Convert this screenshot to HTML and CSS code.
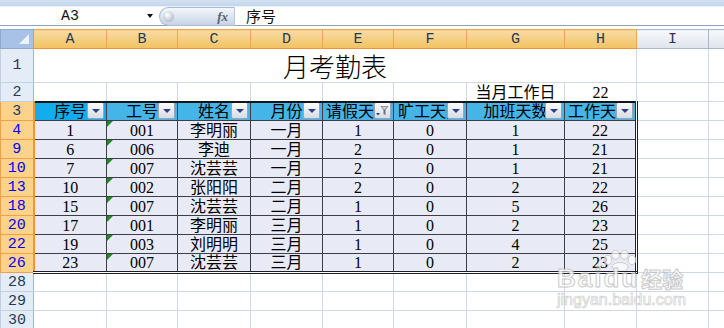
FILE: index.html
```html
<!DOCTYPE html>
<html lang="zh-CN">
<head>
    <meta charset="UTF-8">
    <meta name="viewport" content="width=device-width, initial-scale=1.0">
    <title>月考勤表</title>
    <link rel="stylesheet" href="styles.css">
</head>
<body>
    <div class="top-strip"></div>

    <div class="formula-bar">
        <div class="name-box">
            <span class="cell-ref">A3</span>
            <span class="name-arrow"></span>
        </div>
        <div class="fx-pill">
            <span class="fx-knob"></span>
            <span class="fx">fx</span>
        </div>
        <div class="formula-text">序号</div>
    </div>

    <table class="sheet">
        <colgroup>
            <col class="w-rh">
            <col class="w-73"><col class="w-71"><col class="w-73"><col class="w-72">
            <col class="w-71"><col class="w-73"><col class="w-98"><col class="w-72">
            <col class="w-72"><col class="w-30">
        </colgroup>

        <thead>
            <tr class="col-heads">
                <th class="corner"></th>
                <th class="sel">A</th><th class="sel">B</th><th class="sel">C</th><th class="sel">D</th>
                <th class="sel">E</th><th class="sel">F</th><th class="sel">G</th><th class="sel">H</th>
                <th>I</th><th></th>
            </tr>
        </thead>

        <tbody>
            <tr class="r-title">
                <th class="rh">1</th>
                <td colspan="8" class="title">月考勤表</td>
                <td></td><td></td>
            </tr>
            <tr>
                <th class="rh">2</th>
                <td></td><td></td><td></td><td></td><td></td><td></td>
                <td>当月工作日</td><td>22</td>
                <td></td><td></td>
            </tr>
        </tbody>

        <tbody class="data">
            <tr class="head">
                <th class="rh">3</th>
                <td class="active">序号<span class="dd"></span></td>
                <td>工号<span class="dd"></span></td>
                <td>姓名<span class="dd"></span></td>
                <td>月份<span class="dd"></span></td>
                <td>请假天数<span class="dd filtered"><svg width="15" height="15" viewBox="0 0 15 15"><path d="M1 10 L5 10 L3 12.5 Z" fill="#2f3f86"/><path d="M5.5 3 L13.5 3 L10.5 7 L10.5 12 L8.5 11 L8.5 7 Z" fill="#6b6f78"/><path d="M6.5 3.6 L12.5 3.6 L10 6.6 L9 6.6 Z" fill="#c9ccd3"/></svg></span></td>
                <td>旷工天数<span class="dd"></span></td>
                <td>加班天数<span class="dd"></span></td>
                <td>工作天数<span class="dd"></span></td>
                <td></td><td></td>
            </tr>
            <tr>
                <th class="rh">4</th>
                <td>1</td><td class="txt">001</td><td>李明丽</td><td>一月</td><td>1</td><td>0</td><td>1</td><td>22</td>
                <td></td><td></td>
            </tr>
            <tr>
                <th class="rh">9</th>
                <td>6</td><td class="txt">006</td><td>李迪</td><td>一月</td><td>2</td><td>0</td><td>1</td><td>21</td>
                <td></td><td></td>
            </tr>
            <tr>
                <th class="rh">10</th>
                <td>7</td><td class="txt">007</td><td>沈芸芸</td><td>一月</td><td>2</td><td>0</td><td>1</td><td>21</td>
                <td></td><td></td>
            </tr>
            <tr>
                <th class="rh">13</th>
                <td>10</td><td class="txt">002</td><td>张阳阳</td><td>二月</td><td>2</td><td>0</td><td>2</td><td>22</td>
                <td></td><td></td>
            </tr>
            <tr>
                <th class="rh">18</th>
                <td>15</td><td class="txt">007</td><td>沈芸芸</td><td>二月</td><td>1</td><td>0</td><td>5</td><td>26</td>
                <td></td><td></td>
            </tr>
            <tr>
                <th class="rh">20</th>
                <td>17</td><td class="txt">001</td><td>李明丽</td><td>三月</td><td>1</td><td>0</td><td>2</td><td>23</td>
                <td></td><td></td>
            </tr>
            <tr>
                <th class="rh">22</th>
                <td>19</td><td class="txt">003</td><td>刘明明</td><td>三月</td><td>1</td><td>0</td><td>4</td><td>25</td>
                <td></td><td></td>
            </tr>
            <tr>
                <th class="rh">26</th>
                <td>23</td><td class="txt">007</td><td>沈芸芸</td><td>三月</td><td>1</td><td>0</td><td>2</td><td>23</td>
                <td></td><td></td>
            </tr>
        </tbody>

        <tbody>
            <tr><th class="rh">28</th><td></td><td></td><td></td><td></td><td></td><td></td><td></td><td></td><td></td><td></td></tr>
            <tr><th class="rh">29</th><td></td><td></td><td></td><td></td><td></td><td></td><td></td><td></td><td></td><td></td></tr>
            <tr><th class="rh">30</th><td></td><td></td><td></td><td></td><td></td><td></td><td></td><td></td><td></td><td></td></tr>
        </tbody>
    </table>

    <!-- site watermark over the lower right of the sheet -->
    <div class="watermark">
        <svg class="paw" width="34" height="20" viewBox="0 0 34 20">
            <ellipse cx="5" cy="10" rx="3.8" ry="4.8"/>
            <ellipse cx="12.5" cy="4.8" rx="3.8" ry="4.3"/>
            <ellipse cx="21.5" cy="4.8" rx="3.8" ry="4.3"/>
            <ellipse cx="29" cy="10" rx="3.8" ry="4.8"/>
            <ellipse cx="17" cy="17" rx="8" ry="4.5"/>
        </svg>
        <div class="wm-logo"><span>Bai</span><span class="wm-du">du</span><span class="wm-cn">经验</span></div>
        <div class="wm-url">jingyan.baidu.com</div>
    </div>
</body>
</html>
```

FILE: styles.css
```css
body {
    margin: 0;
    width: 724px;
    height: 328px;
    overflow: hidden;
    position: relative;
    background-color: #fff;
    font-family: "Liberation Serif", "Noto Sans CJK SC", serif;
}

/* ribbon edge + formula bar */
.top-strip {
    height: 6px;
    background: linear-gradient(#d3e1f2, #c3d6ed);
    border-bottom: 1px solid #e9f0f9;
}

.formula-bar {
    display: flex;
    height: 18px;
    border-bottom: 1px solid #8ea3bf;
    margin-bottom: 3px;
}

.name-box {
    width: 159px;
    display: flex;
    align-items: center;
}

.cell-ref {
    width: 140px;
    text-align: center;
    font-family: "Liberation Mono", monospace;
    font-size: 15px;
    color: #111;
}

.name-arrow {
    margin-left: 7px;
    border-left: 3px solid transparent;
    border-right: 3px solid transparent;
    border-top: 4px solid #111;
}

.fx-pill {
    width: 76px;
    display: flex;
    align-items: center;
    border: 1px solid #a9bad2;
    border-right-color: #b9c7da;
    border-radius: 10px 0 0 10px;
    background: linear-gradient(#f5f8fc, #dfe7f2 45%, #c6d4e7);
    box-sizing: border-box;
    height: 19px;
}

.fx-knob {
    width: 11px;
    height: 11px;
    margin-left: 3px;
    border-radius: 50%;
    background: radial-gradient(circle at 40% 35%, #fff, #c9d0da 55%, #9aa4b3);
}

.fx {
    margin-left: auto;
    margin-right: 6px;
    font-family: "Liberation Serif", serif;
    font-style: italic;
    font-weight: bold;
    font-size: 13px;
    color: #5a5f68;
}

.formula-text {
    padding-left: 11px;
    font-family: "Noto Sans CJK SC", sans-serif;
    font-size: 15px;
    line-height: 18px;
    color: #111;
}

/* worksheet */
.sheet {
    border-collapse: collapse;
    table-layout: fixed;
    width: 738px;
}

.w-rh { width: 33px; }
.w-30 { width: 30px; }
.w-71 { width: 71px; }
.w-72 { width: 72px; }
.w-73 { width: 73px; }
.w-98 { width: 98px; }

.sheet tr { height: 19px; }
.sheet tr.r-title { height: 34px; }

.sheet td,
.sheet th {
    border: 1px solid #d0d7e5;
    padding: 0;
    overflow: hidden;
    white-space: nowrap;
    text-align: center;
    vertical-align: bottom;
    font-size: 16px;
    font-weight: normal;
    line-height: 17px;
    color: #000;
}

.col-heads th {
    background: linear-gradient(#f6f8fb, #dfe4ec);
    border-color: #a8b9cf;
    font-family: "Liberation Mono", monospace;
    font-size: 15px;
    color: #25395a;
    vertical-align: middle;
}

.col-heads th.sel {
    background: linear-gradient(#f9dba4, #f2c261);
    border-color: #f0a552;
    border-bottom: 1px solid #f29436;
}

.col-heads th.corner {
    position: relative;
    background: #a7c2e6;
    border-color: #8fa9cc;
}

.corner::after {
    content: '';
    position: absolute;
    right: 4px;
    bottom: 4px;
    border-left: 10px solid transparent;
    border-bottom: 10px solid #eef3fa;
}

.sheet .rh {
    background: #e4ecf7;
    border-color: #c3d0e2;
    border-right: 1px solid #9eb6ce;
    font-family: "Liberation Mono", monospace;
    font-size: 15px;
    color: #25395a;
    vertical-align: middle;
}

.sheet .data .rh {
    background: #fdd38c;
    border-color: #f1a04a;
    border-right: 2px solid #f29436;
    color: #0000ff;
}

.sheet .data .head .rh {
    color: #25395a;
}

.sheet .title {
    overflow: visible;
    font-family: "Noto Sans CJK SC", sans-serif;
    font-weight: 300;
    font-size: 26px;
    line-height: 32px;
}

/* the filtered list A3:H26 */
.data td:nth-child(-n+9) {
    position: relative;
    border: 1px solid #3d3d4b;
    background: #e8ebf5;
}

.data td:nth-child(9) {
    border-right: 3px double #1e1e26;
}

.data tr:last-child td:nth-child(-n+9) {
    border-bottom: 3px double #1e1e26;
}

.data .head td:nth-child(-n+9) {
    border-top: 2px solid #14141a;
    background: #45b5e7;
}

.data .head td.active {
    background: #11adee;
}

.dd {
    position: absolute;
    right: 2px;
    bottom: 1px;
    width: 15px;
    height: 15px;
    border: 1px solid #9ca4b4;
    border-radius: 2px;
    background: linear-gradient(#fafbfc, #d8dce4);
}

.dd::after {
    content: '';
    position: absolute;
    left: 4px;
    top: 6px;
    border-left: 4px solid transparent;
    border-right: 4px solid transparent;
    border-top: 4px solid #2f3f86;
}

.dd.filtered::after {
    display: none;
}

.dd svg {
    display: block;
}

.txt::before {
    content: '';
    position: absolute;
    left: 0;
    top: 0;
    border-right: 6px solid transparent;
    border-top: 6px solid #1f8a1f;
}

/* watermark */
.watermark {
    position: absolute;
    left: 557px;
    top: 250px;
    width: 132px;
    opacity: 0.8;
}

.paw {
    display: block;
    margin-left: 46px;
    fill: rgba(255, 255, 255, 0.85);
    stroke: #c4c4c4;
    stroke-width: 1;
}

.wm-logo {
    display: flex;
    align-items: baseline;
    margin-top: -5px;
    font-family: "Liberation Sans", sans-serif;
    font-weight: bold;
    font-size: 26px;
    line-height: 27px;
    letter-spacing: 2px;
    color: #fff;
    -webkit-text-stroke: 1px #bdbdbd;
}

.wm-cn {
    margin-left: 2px;
    letter-spacing: 0;
    font-family: "Noto Sans CJK SC", sans-serif;
    font-size: 21px;
    line-height: 27px;
}

.wm-url {
    font-family: "Liberation Sans", sans-serif;
    font-size: 16px;
    line-height: 16px;
    color: #fff;
    -webkit-text-stroke: 0.7px #c4c4c4;
}
```
